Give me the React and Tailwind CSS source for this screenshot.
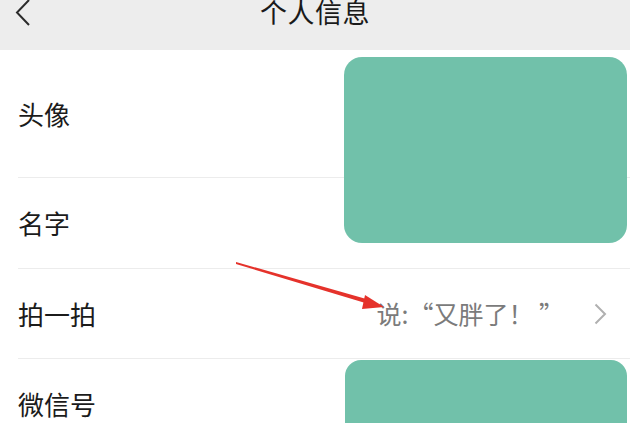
import React from 'react'

const rows = [
  { label: '头像', height: 'h-[127px]' },
  { label: '名字', height: 'h-[90px]' },
  { label: '拍一拍', height: 'h-[89px]', value: '说:“又胖了！ ”', arrow: true },
  { label: '微信号', height: 'h-[90px]' },
]

export default function App() {
  return (
    <div className="relative w-[630px] h-[423px] overflow-hidden bg-white font-['Noto_Sans_CJK_SC',sans-serif]">
      {/* Header */}
      <div className="relative h-[50px] bg-[#ededed] flex justify-center">
        <svg className="absolute left-[14px] -top-[1px]" width="18" height="28" viewBox="0 0 18 28">
          <polyline points="15,1 3,13.5 15,26" fill="none" stroke="#2b2b2b" strokeWidth="2" />
        </svg>
        <h1 className="-mt-[5px] text-[27px] leading-[34px] text-[#1a1a1a] tracking-[0.5px]">个人信息</h1>
      </div>

      {/* Rows */}
      <div className="flex flex-col">
        {rows.map((row, i) => (
          <div key={row.label}>
            {i > 0 && <div className="ml-[18px] h-px bg-[#ececec]" />}
            <div className={`${row.height} flex items-center pl-[18px] pr-[23px]`}>
              <span className="text-[26px] leading-none text-[#1b1b1b]">{row.label}</span>
              {row.value && (
                <div className="ml-auto flex items-center gap-[30px]">
                  <span className="text-[25px] leading-none text-[#7b7b7b]">{row.value}</span>
                  <svg width="13" height="22" viewBox="0 0 13 22">
                    <polyline points="1.5,1.5 11,11 1.5,20.5" fill="none" stroke="#b0b0b0" strokeWidth="2" />
                  </svg>
                </div>
              )}
            </div>
          </div>
        ))}
      </div>

      {/* Redaction boxes over content */}
      <div className="absolute left-[344px] top-[57px] w-[283px] h-[186px] rounded-[18px] bg-[#71c1aa]" />
      <div className="absolute left-[345px] top-[360px] w-[282px] h-[90px] rounded-t-[16px] bg-[#71c1aa]" />

      {/* Red arrow annotation */}
      <svg className="absolute left-0 top-0" width="630" height="423" viewBox="0 0 630 423">
        <polygon points="236,262 368,299.5 367,303.5 236,264" fill="#e5322b" />
        <polygon points="384,307 365,295 362,309" fill="#e5322b" />
      </svg>
    </div>
  )
}
